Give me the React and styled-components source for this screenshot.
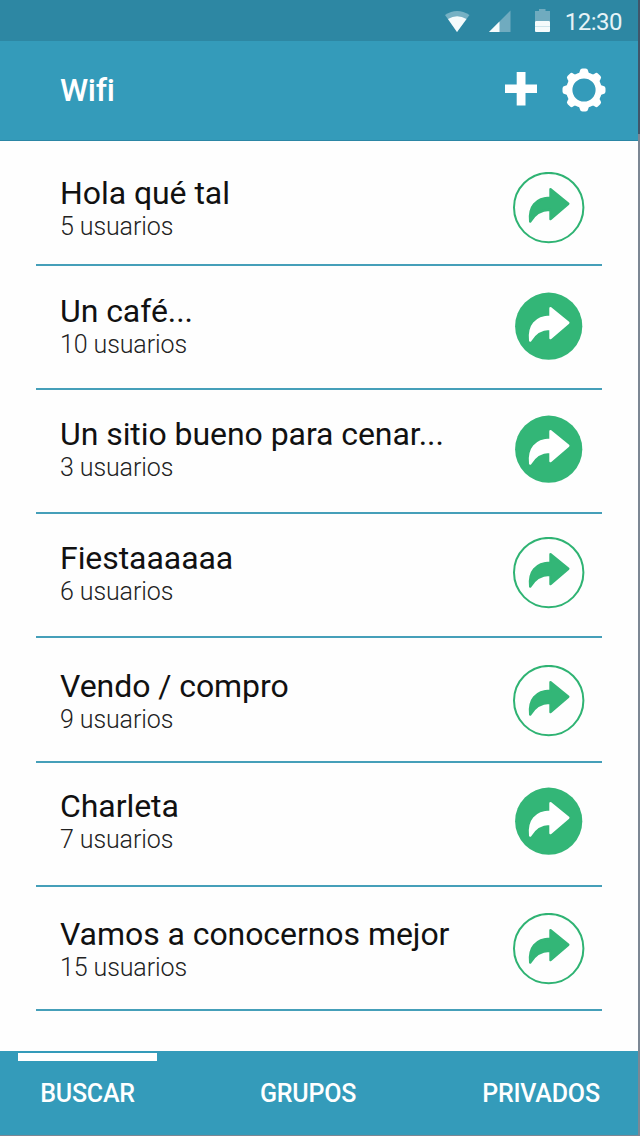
import React, { useState } from "react";
import styled, { createGlobalStyle } from "styled-components";

const GlobalStyle = createGlobalStyle`
    body {
        margin: 0;
        background: linear-gradient(#40566a 134px, #7c8794 134px) no-repeat #7c8794;
    }
    * {
        box-sizing: border-box;
    }
`

const Screen = styled.div`
    width: 638px;
    height: 1135px;
    display: flex;
    flex-direction: column;
    background: #fefefe;
    font-family: Roboto, sans-serif;
    overflow: hidden;
`

const StatusBar = styled.div`
    height: 41px;
    display: flex;
    align-items: center;
    justify-content: flex-end;
    padding: 2px 16px 0 0;
    background: #2d87a3;
`

const StatusIcons = styled.svg`
    display: block;
    width: 120px;
    height: 34px;
    margin: 0 5px 2px 0;
`

const Clock = styled.span`
    color: #e6f3f7;
    font-size: 24px;
    line-height: 36px;
    letter-spacing: -0.5px;
`

const Header = styled.header`
    height: 100px;
    display: flex;
    align-items: center;
    padding: 0 32px 2px 60px;
    background: #349bba;
    border-bottom: 1px solid #2b86a5;
`

const Title = styled.h1`
    flex: 1;
    margin: 0;
    color: white;
    font-size: 32px;
    font-weight: 500;
    line-height: 38px;
    letter-spacing: -0.3px;
`

const IconButton = styled.button`
    display: flex;
    padding: 0 0 ${({ $lift }) => $lift || 0}px;
    margin-left: ${({ $gap }) => $gap || 0}px;
    border: 0;
    background: none;
    cursor: pointer;
`

const List = styled.ul`
    flex: 1;
    margin: 0;
    padding: 0 36px;
    list-style: none;
`

const Row = styled.li`
    height: ${({ $height }) => $height}px;
    display: flex;
    justify-content: space-between;
    align-items: flex-start;
    padding: ${({ $top }) => $top}px 17px 0 24px;
    border-bottom: 2px solid #459fb9;
`

const RoomText = styled.div`
    padding-top: 2px;
`

const RoomName = styled.div`
    color: #111;
    font-size: 32px;
    line-height: 38px;
    letter-spacing: -0.06px;
`

const RoomUsers = styled.div`
    color: #222;
    font-size: 25px;
    font-weight: 300;
    line-height: 30px;
    letter-spacing: -0.1px;
`

const Tabs = styled.nav`
    height: 84px;
    display: grid;
    grid-template-columns: 139px 302px 1fr;
    padding: 2px 15px 0 18px;
    background: #349bba;
`

const Tab = styled.button`
    padding: 18px 0 0;
    border: 0;
    border-top: 8px solid ${({ $active }) => ($active ? 'white' : 'transparent')};
    background: none;
    color: white;
    font-family: inherit;
    font-size: 25px;
    font-weight: 500;
    line-height: 30px;
    letter-spacing: -0.2px;
    display: flex;
    justify-content: center;
    cursor: pointer;
`

const ROOMS = [
    { name: 'Hola qué tal', users: 5, joined: false, top: 31, height: 125 },
    { name: 'Un café...', users: 10, joined: true, top: 24, height: 124 },
    { name: 'Un sitio bueno para cenar...', users: 3, joined: true, top: 23, height: 124 },
    { name: 'Fiestaaaaaa', users: 6, joined: false, top: 23, height: 124 },
    { name: 'Vendo / compro', users: 9, joined: false, top: 27, height: 125 },
    { name: 'Charleta', users: 7, joined: true, top: 22, height: 124 },
    { name: 'Vamos a conocernos mejor', users: 15, joined: false, top: 26, height: 124 },
]

const TABS = ['BUSCAR', 'GRUPOS', 'PRIVADOS']

const TEETH = [0, 45, 90, 135, 180, 225, 270, 315]

function ShareIcon({ filled }) {
    return (
        <svg width="72" height="72" viewBox="0 0 72 72">
            {filled
                ? <circle cx="35.7" cy="36.2" r="33.6" fill="#33b677" />
                : <circle cx="35.7" cy="35.6" r="34.7" fill="none" stroke="#2fb373" strokeWidth="2" />}
            <path
                transform={filled ? 'translate(0 1)' : undefined}
                d="M37.5 17.2 L55.300 31.800 L37.500 47.100 V37.900 C29 37.500 22.800 40.500 17.200 49.600 C15.500 35 22.500 25.900 37.500 25.700 Z"
                fill={filled ? 'white' : '#33b677'}
                stroke={filled ? 'white' : '#33b677'}
                strokeWidth="2.4"
                strokeLinejoin="round"
            />
        </svg>
    )
}

function App() {
    const [active, setActive] = useState('BUSCAR');

    return (
        <>
            <GlobalStyle />
            <Screen>
                <StatusBar>
                    <StatusIcons viewBox="440 4 120 34">
                        <path d="M445 15 Q457 7 469.5 15 L457 32 Z" fill="#76b1c4" />
                        <path d="M448 19 Q457 13.5 466.5 19 L457 32 Z" fill="#f5fbfc" />
                        <path d="M489 32 L510.5 10.5 V32 Z" fill="#70abbf" />
                        <path d="M489 32 L499.5 21.5 V32 Z" fill="#f5fbfc" />
                        <path d="M535 11 H539 V9 H545.5 V11 H550 V21 H535 Z" fill="#70abbf" />
                        <rect x="535" y="21" width="15" height="11" rx="1" fill="#f5fbfc" />
                        <path d="M535 26.5 H550" stroke="#c3dfe7" strokeWidth="0.8" />
                    </StatusIcons>
                    <Clock>12:30</Clock>
                </StatusBar>
                <Header>
                    <Title>Wifi</Title>
                    <IconButton aria-label="Añadir" $lift={2}>
                        <svg width="32" height="34" viewBox="0 0 32 34">
                            <path d="M11.7 0 H20.5 V12.5 H32 V21 H20.5 V33.5 H11.7 V21 H0 V12.5 H11.7 Z" fill="white" />
                        </svg>
                    </IconButton>
                    <IconButton aria-label="Ajustes" $gap={25}>
                        <svg width="44" height="44" viewBox="-22 -22 44 44">
                            <circle r="14.7" fill="none" stroke="white" strokeWidth="6.2" />
                            {TEETH.map((angle) => (
                                <path
                                    key={angle}
                                    transform={`rotate(${angle})`}
                                    d="M-6.5 -15 Q-4.2 -17 -4 -19.5 Q-3.7 -21.5 -1.5 -21.5 H1.5 Q3.7 -21.5 4 -19.5 Q4.2 -17 6.5 -15 Z"
                                    fill="white"
                                />
                            ))}
                        </svg>
                    </IconButton>
                </Header>
                <List>
                    {ROOMS.map((room) => (
                        <Row key={room.name} $top={room.top} $height={room.height}>
                            <RoomText>
                                <RoomName>{room.name}</RoomName>
                                <RoomUsers>{room.users} usuarios</RoomUsers>
                            </RoomText>
                            <IconButton aria-label="Entrar">
                                <ShareIcon filled={room.joined} />
                            </IconButton>
                        </Row>
                    ))}
                </List>
                <Tabs>
                    {TABS.map((tab) => (
                        <Tab key={tab} $active={tab === active} onClick={() => setActive(tab)}>{tab}</Tab>
                    ))}
                </Tabs>
            </Screen>
        </>
    );
}

export default App;
